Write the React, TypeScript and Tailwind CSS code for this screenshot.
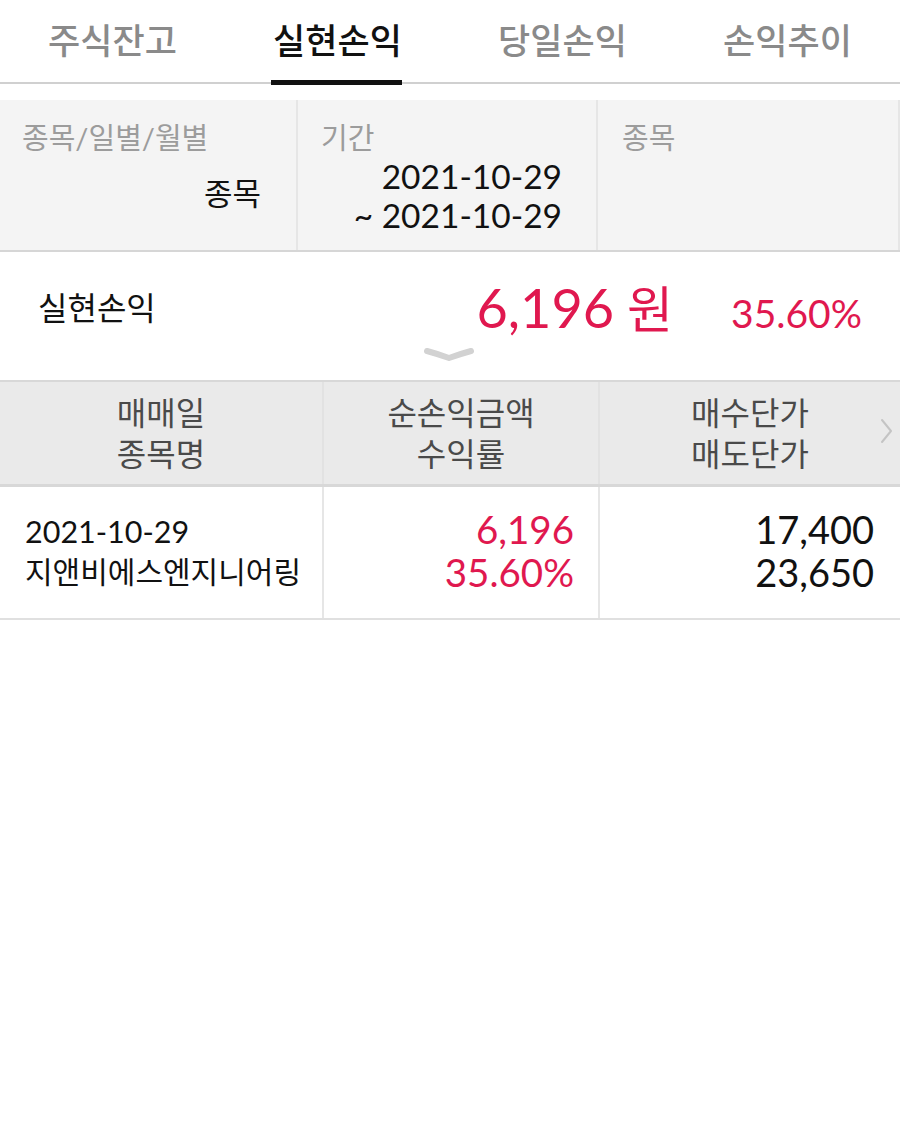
import React from "react";

const tabs = ["주식잔고", "실현손익", "당일손익", "손익추이"];

export default function App() {
  return (
    <div className="w-[900px] min-h-[1132px] bg-white font-['Lato','Noto_Sans_CJK_KR',sans-serif] text-[#111]">
      {/* Tabs */}
      <div className="flex h-[84px] border-b-2 border-[#d0d0d0]">
        {tabs.map((t, i) => (
          <div key={t} className="relative flex flex-1 items-center justify-center pb-[2px]">
            <span
              className={
                "text-[35px] leading-none font-medium " +
                (i === 1 ? "text-[#111]" : "text-[#8a8a8a]")
              }
            >
              {t}
            </span>
            {i === 1 && (
              <div className="absolute bottom-[-3px] left-[46px] h-[5px] w-[131px] bg-[#111]" />
            )}
          </div>
        ))}
      </div>

      {/* Filter */}
      <div className="mt-[16px] grid h-[152px] grid-cols-[298px_300px_302px] border-b-2 border-[#d6d6d6] bg-[#f4f4f4]">
        <div className="flex flex-col border-r-2 border-[#e6e6e6] pl-[22px] pr-[35px] pt-[20px]">
          <div className="text-[29px] leading-[36px] text-[#9c9c9c]">종목/일별/월별</div>
          <div className="mt-[19px] text-right text-[31px] leading-[36px]">종목</div>
        </div>
        <div className="flex flex-col border-r-2 border-[#e6e6e6] pl-[23px] pr-[34px] pt-[20px]">
          <div className="text-[29px] leading-[36px] text-[#9c9c9c]">기간</div>
          <div className="mt-[1px] text-right text-[33.5px] leading-[39px]">2021-10-29</div>
          <div className="text-right text-[33.5px] leading-[39px]">~ 2021-10-29</div>
        </div>
        <div className="flex flex-col border-r-2 border-[#e6e6e6] pl-[24px] pt-[20px]">
          <div className="text-[29px] leading-[36px] text-[#9c9c9c]">종목</div>
        </div>
      </div>

      {/* Summary */}
      <div className="flex h-[128px] flex-col">
        <div className="mt-[20px] flex h-[72px] items-center pl-[38px] pr-[38px]">
          <div className="text-[32px] leading-none">실현손익</div>
          <div className="ml-auto flex items-baseline text-[#e0184f]">
            <span className="text-[54px] leading-none">6,196</span>
            <span className="ml-[13px] text-[50px] leading-none">원</span>
            <span className="ml-[58px] text-[39px] leading-none">35.60%</span>
          </div>
        </div>
        <div className="mt-[2px] flex justify-center">
          <svg width="52" height="16" viewBox="0 0 52 16" className="-ml-[2px]">
            <path d="M4 5 Q15 8 26 12 Q37 8 48 5" fill="none" stroke="#d2d2d2" strokeWidth="6" strokeLinecap="round" strokeLinejoin="round" />
          </svg>
        </div>
      </div>

      {/* Table header */}
      <div className="grid h-[107px] grid-cols-[324px_276px_300px] border-t-2 border-b-[3px] border-[#d8d8d8] bg-[#eaeaea] text-[#4a4a4a]">
        <div className="flex flex-col items-center justify-center border-r-2 border-[#e2e2e2] text-[32px] leading-[41px]">
          <div>매매일</div>
          <div>종목명</div>
        </div>
        <div className="flex flex-col items-center justify-center border-r-2 border-[#e2e2e2] text-[32px] leading-[41px]">
          <div>순손익금액</div>
          <div>수익률</div>
        </div>
        <div className="relative flex flex-col items-center justify-center text-[32px] leading-[41px]">
          <div>매수단가</div>
          <div>매도단가</div>
          <svg width="14" height="26" viewBox="0 0 14 26" className="absolute right-[6px] top-[36px]">
            <path d="M2 2 L11 13 L2 24" fill="none" stroke="#c4c4c4" strokeWidth="2" strokeLinecap="round" strokeLinejoin="round" />
          </svg>
        </div>
      </div>

      {/* Data row */}
      <div className="grid h-[133px] grid-cols-[324px_276px_300px] border-b-2 border-[#e0e0e0]">
        <div className="flex flex-col justify-center border-r-2 border-[#e6e6e6] pl-[25px] pb-[3px]">
          <div className="text-[30.5px] leading-[40px]">2021-10-29</div>
          <div className="text-[30px] leading-[40px]">지앤비에스엔지니어링</div>
        </div>
        <div className="flex flex-col items-end justify-center border-r-2 border-[#e6e6e6] pr-[24px] pb-[3px] text-[#e0184f]">
          <div className="text-[38.5px] leading-[43px]">6,196</div>
          <div className="text-[38.5px] leading-[43px]">35.60%</div>
        </div>
        <div className="flex flex-col items-end justify-center pr-[26px] pb-[3px]">
          <div className="text-[38px] leading-[43px]">17,400</div>
          <div className="text-[38px] leading-[43px]">23,650</div>
        </div>
      </div>
    </div>
  );
}
